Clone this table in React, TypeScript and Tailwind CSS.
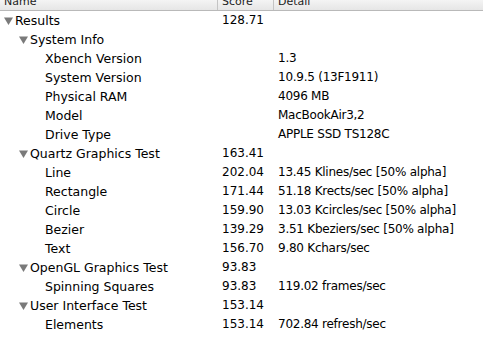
import React from 'react';

type Row = {
  name: string;
  level: 0 | 1 | 2;
  open?: boolean;
  score?: string;
  detail?: string;
};

const rows: Row[] = [
  { name: 'Results', level: 0, open: true, score: '128.71' },
  { name: 'System Info', level: 1, open: true },
  { name: 'Xbench Version', level: 2, detail: '1.3' },
  { name: 'System Version', level: 2, detail: '10.9.5 (13F1911)' },
  { name: 'Physical RAM', level: 2, detail: '4096 MB' },
  { name: 'Model', level: 2, detail: 'MacBookAir3,2' },
  { name: 'Drive Type', level: 2, detail: 'APPLE SSD TS128C' },
  { name: 'Quartz Graphics Test', level: 1, open: true, score: '163.41' },
  { name: 'Line', level: 2, score: '202.04', detail: '13.45 Klines/sec [50% alpha]' },
  { name: 'Rectangle', level: 2, score: '171.44', detail: '51.18 Krects/sec [50% alpha]' },
  { name: 'Circle', level: 2, score: '159.90', detail: '13.03 Kcircles/sec [50% alpha]' },
  { name: 'Bezier', level: 2, score: '139.29', detail: '3.51 Kbeziers/sec [50% alpha]' },
  { name: 'Text', level: 2, score: '156.70', detail: '9.80 Kchars/sec' },
  { name: 'OpenGL Graphics Test', level: 1, open: true, score: '93.83' },
  { name: 'Spinning Squares', level: 2, score: '93.83', detail: '119.02 frames/sec' },
  { name: 'User Interface Test', level: 1, open: true, score: '153.14' },
  { name: 'Elements', level: 2, score: '153.14', detail: '702.84 refresh/sec' },
];

const Disclosure = () => (
  <svg width="10" height="8" viewBox="0 0 10 8" className="mr-[1px] shrink-0">
    <path d="M0 0.5 L9 0.5 L4.5 8 Z" fill="#7a7a7a" />
  </svg>
);

const indent = ['pl-[4px]', 'pl-[19px]', 'pl-[45px]'];

const App = () => {
  return (
    <div
      className="h-[357px] w-[483px] overflow-hidden bg-white text-[12px] text-black"
      style={{ fontFamily: '"DejaVu Sans", Verdana, sans-serif' }}
    >
      {/* column header, scrolled so only its lower part shows */}
      <div className="grid h-[11px] grid-cols-[218px_56px_1fr] overflow-hidden border-b border-[#b9b9b9] bg-gradient-to-b from-[#f4f4f4] to-[#e6e6e6] text-[11px] text-[#222]">
        <div className="border-r border-[#c4c4c4] pl-[4px]">
          <span className="-mt-[5px] block leading-[13px]">Name</span>
        </div>
        <div className="border-r border-[#c4c4c4] pl-[4px]">
          <span className="-mt-[5px] block leading-[13px]">Score</span>
        </div>
        <div className="pl-[4px]">
          <span className="-mt-[5px] block leading-[13px]">Detail</span>
        </div>
      </div>

      {rows.map((r) => (
        <div key={r.name} className="grid h-[19px] grid-cols-[218px_56px_1fr] items-center leading-[19px]">
          <div className={`flex items-center whitespace-nowrap text-[12.5px] ${indent[r.level]}`}>
            {r.open && <Disclosure />}
            <span>{r.name}</span>
          </div>
          <div className="pl-[4px] whitespace-nowrap">{r.score}</div>
          <div className="pl-[4px] whitespace-nowrap tracking-[-0.25px]">{r.detail}</div>
        </div>
      ))}
    </div>
  );
};

export default App;
